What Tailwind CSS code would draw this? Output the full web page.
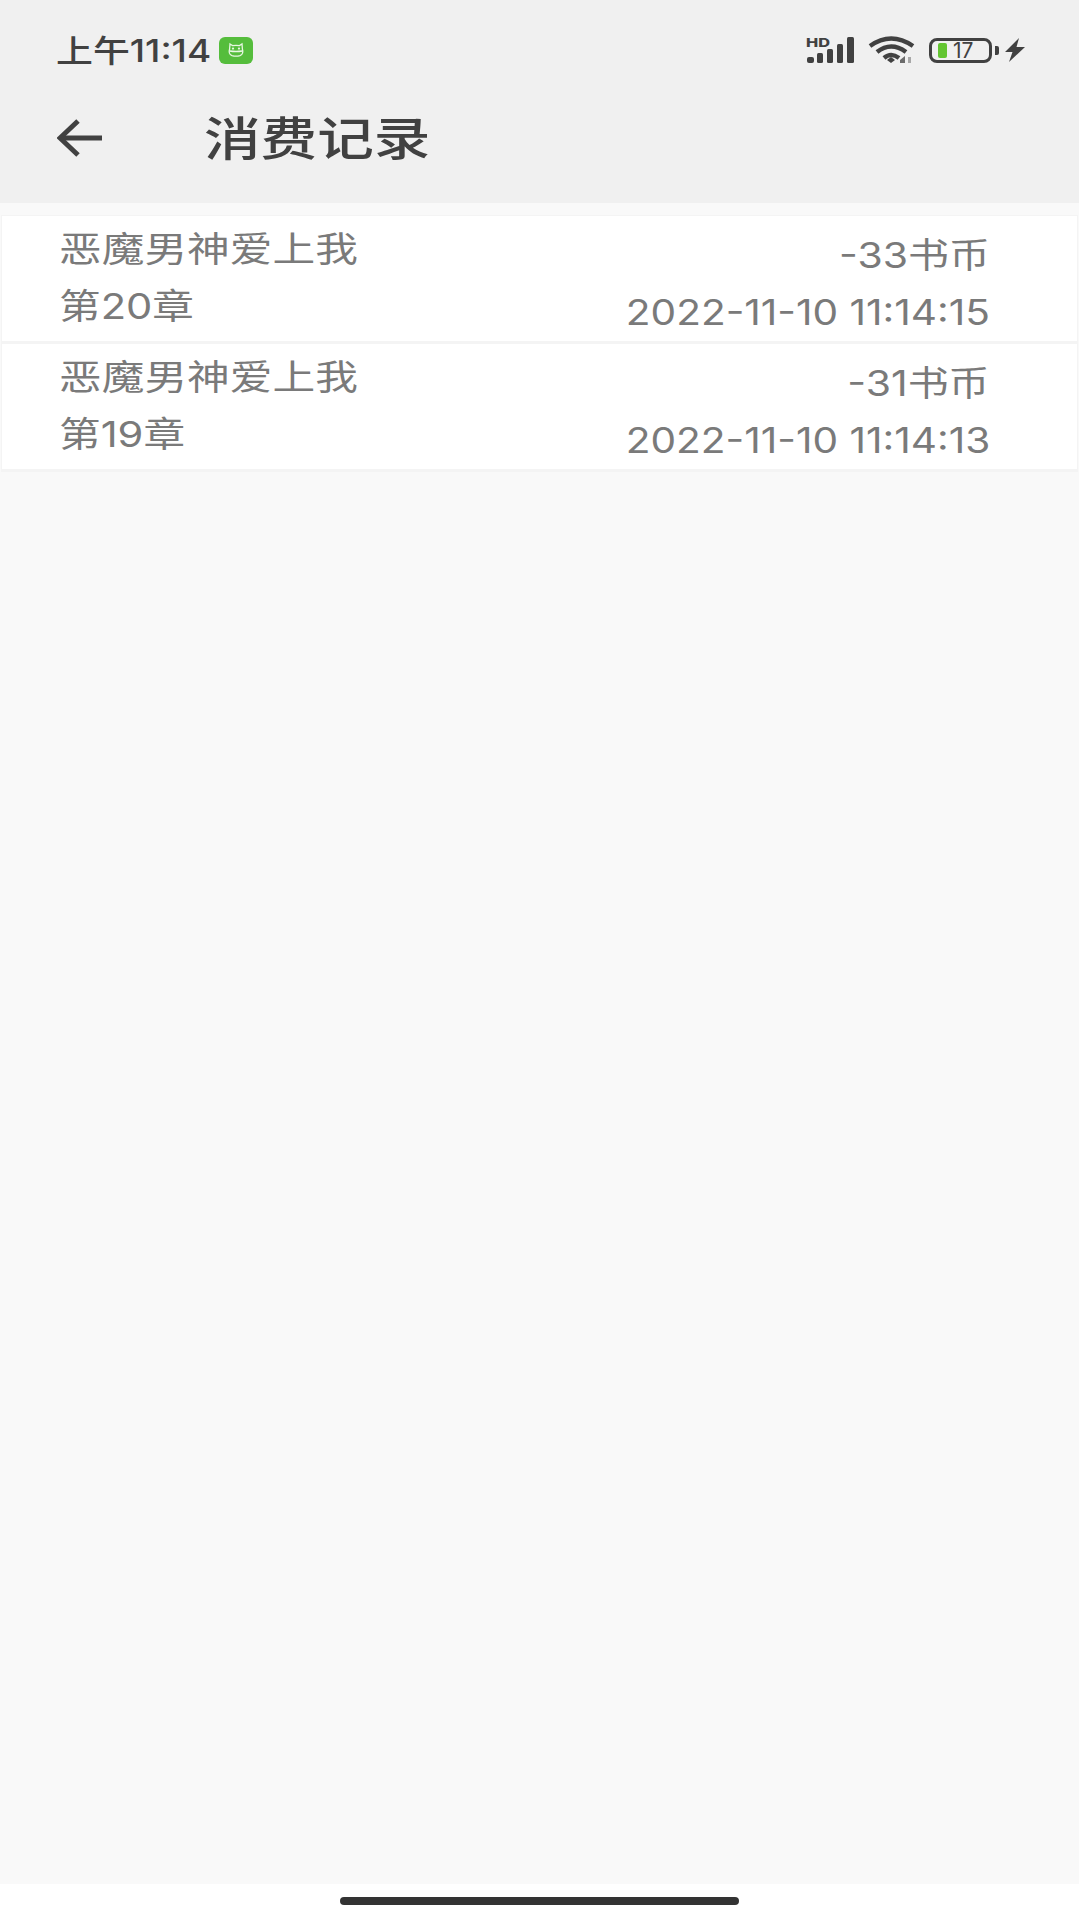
<!DOCTYPE html>
<html lang="zh-CN">
<head>
    <meta charset="UTF-8">
    <meta name="viewport" content="width=device-width, initial-scale=1.0">
    <title>消费记录</title>
    <script src="https://cdn.jsdelivr.net/npm/@tailwindcss/browser@4"></script>
</head>
<body class="font-['Inter','Noto_Sans_CJK_SC',sans-serif]">
    <div class="w-[1079px] h-[1919px] flex flex-col bg-[#f9f9f9] overflow-hidden">
        <!-- Header with status bar and title -->
        <header class="h-[203px] bg-[#f0f0f0] text-[#414141]">
            <div class="h-[100px] flex items-center pl-[56px] pr-[54px]">
                <span class="inline-block w-[125px] origin-left scale-x-[1.19] text-[31px] leading-none font-medium whitespace-nowrap">上午11:14</span>
                <div class="ml-[38px] w-[34px] h-[27px] rounded-[6px] bg-[#55bd3c] flex items-center justify-center">
                    <svg width="18" height="16" viewBox="0 0 18 16" fill="none" stroke="#e8f7e2" stroke-width="1.3">
                        <path d="M3 2 L5.5 3.6 Q9 3 12.5 3.6 L15 2 L15.4 7 Q17 12 13 13.6 Q9 14.8 5 13.6 Q1 12 2.6 7 Z"/>
                        <path d="M2.6 9 Q9 10 15.4 9"/>
                        <circle cx="6" cy="6.6" r="0.5"/>
                        <circle cx="12" cy="6.6" r="0.5"/>
                    </svg>
                </div>
                <div class="ml-auto flex items-center">
                    <!-- signal -->
                    <svg class="overflow-visible" width="50" height="28" viewBox="0 0 50 28" fill="#414141">
                        <text x="0" y="11" font-size="12" font-weight="800" font-family="Inter, sans-serif" textLength="24" lengthAdjust="spacingAndGlyphs">HD</text>
                        <rect x="1" y="21" width="7" height="6" rx="2"/>
                        <rect x="11" y="17" width="6" height="10" rx="1.5"/>
                        <rect x="21" y="13" width="6" height="14" rx="1.5"/>
                        <rect x="31" y="8" width="6" height="19" rx="1.5"/>
                        <rect x="41" y="1" width="7" height="26" rx="1.5"/>
                    </svg>
                    <!-- wifi -->
                    <svg class="ml-[12px]" width="48" height="28" viewBox="0 0 48 28" fill="none" stroke="#414141" stroke-width="4.5">
                        <path d="M2 10 Q23 -5 45 10"/>
                        <path d="M9 16 Q23 5 38 16"/>
                        <path d="M16 22 Q23 16 31 22"/>
                        <path d="M19 24 L23 21 L27 24 L23 27 Z" fill="#414141" stroke="none"/>
                        <path d="M32 24 L37 20 V27 H32 Z" fill="#6b6b6b" stroke="none"/>
                        <rect x="40" y="21" width="3" height="6" fill="#a8a8a8" stroke="none"/>
                    </svg>
                    <!-- battery -->
                    <div class="ml-[13px] w-[63px] h-[25px] rounded-[8px] border-[3px] border-[#414141] flex items-center pl-[6px]">
                        <div class="w-[9px] h-[15px] rounded-[2px] bg-[#63c531]"></div>
                        <span class="ml-[6px] text-[21px] leading-none">17</span>
                    </div>
                    <div class="ml-[3px] w-[4px] h-[9px] rounded-r-[2px] bg-[#414141]"></div>
                    <svg class="ml-[6px]" width="20" height="24" viewBox="0 0 20 24" fill="#414141">
                        <path d="M14 0 L0 14 H7.5 L4 24 L20 9 H11.5 Z"/>
                    </svg>
                </div>
            </div>
            <div class="h-[76px] flex items-center pl-[57px]">
                <svg width="45" height="38" viewBox="0 0 45 38" fill="none" stroke="#414141" stroke-width="5">
                    <path d="M21 2 L3 19 L21 36"/>
                    <path d="M3 19 H45"/>
                </svg>
                <h1 class="ml-[102px] w-[180px] origin-left scale-x-[1.23] text-[46px] leading-none font-medium whitespace-nowrap">消费记录</h1>
            </div>
        </header>

        <!-- Record list -->
        <main class="flex-1 pt-[12px] px-[1px]">
            <div class="h-[125px] bg-white border-x border-t border-b-[3px] border-[#f4f4f4] box-content flex justify-between pl-[57px] pr-[87px] text-[#7a7a7a]">
                <div class="flex flex-col pt-[16px] gap-[22px] text-[35px] leading-[35px]">
                    <span class="inline-block w-[245px] origin-left scale-x-[1.22] whitespace-nowrap">恶魔男神爱上我</span>
                    <span class="inline-block w-[110px] origin-left scale-x-[1.19] whitespace-nowrap">第20章</span>
                </div>
                <div class="flex flex-col items-end pt-[22px] gap-[22px] text-[35px] leading-[35px]">
                    <span class="origin-right scale-x-[1.17] whitespace-nowrap">-33书币</span>
                    <span class="origin-right scale-x-[1.16] whitespace-nowrap">2022-11-10 11:14:15</span>
                </div>
            </div>
            <div class="h-[125px] bg-white border-x border-b-[3px] border-[#f4f4f4] box-content flex justify-between pl-[57px] pr-[87px] text-[#7a7a7a]">
                <div class="flex flex-col pt-[16px] gap-[22px] text-[35px] leading-[35px]">
                    <span class="inline-block w-[245px] origin-left scale-x-[1.22] whitespace-nowrap">恶魔男神爱上我</span>
                    <span class="inline-block w-[110px] origin-left scale-x-[1.19] whitespace-nowrap">第19章</span>
                </div>
                <div class="flex flex-col items-end pt-[22px] gap-[22px] text-[35px] leading-[35px]">
                    <span class="origin-right scale-x-[1.17] whitespace-nowrap">-31书币</span>
                    <span class="origin-right scale-x-[1.16] whitespace-nowrap">2022-11-10 11:14:13</span>
                </div>
            </div>
        </main>

        <!-- Gesture bar -->
        <footer class="h-[35px] bg-white flex justify-center pt-[13px]">
            <div class="w-[399px] h-[8px] rounded-full bg-[#333333]"></div>
        </footer>
    </div>
</body>
</html>
